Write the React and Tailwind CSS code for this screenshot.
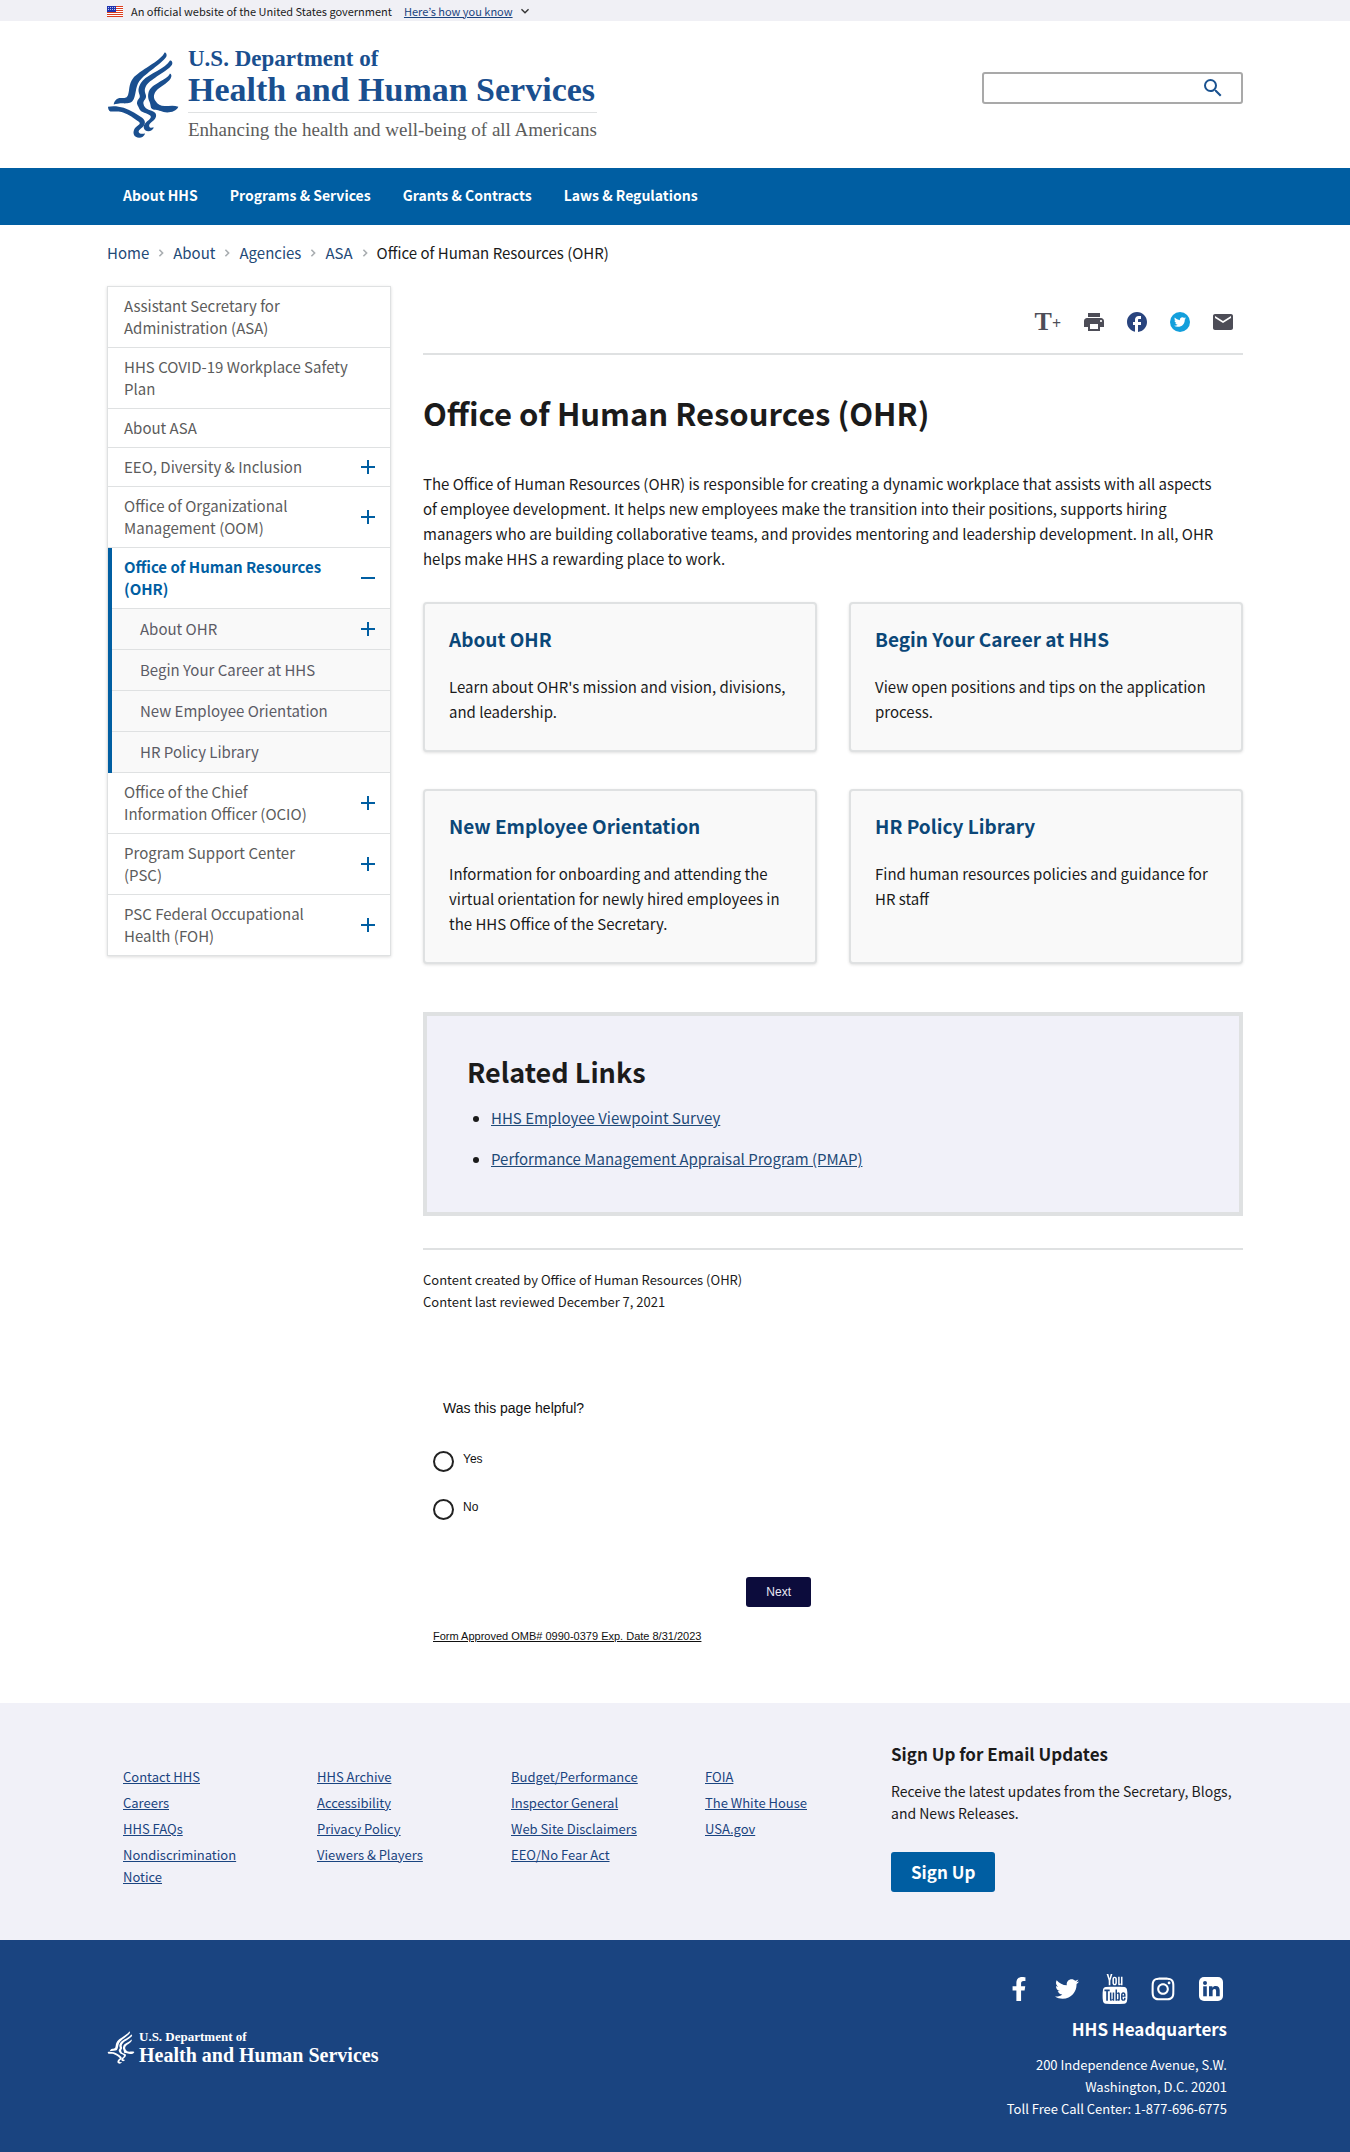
import React from "react";
import { MdSearch, MdPrint, MdFacebook, MdEmail, MdKeyboardArrowDown } from "react-icons/md";
import { FaFacebookF, FaTwitter, FaInstagram } from "react-icons/fa";
import { TfiYoutube } from "react-icons/tfi";

const container = "mx-auto w-full max-w-[1136px]";

function Flag() {
  return (
    <svg viewBox="0 0 16 11" className="h-[11px] w-4" aria-hidden="true">
      <rect width="16" height="11" fill="#fff" />
      {[0, 2, 4, 6, 8, 10].map((y) => (
        <rect key={y} y={y} width="16" height="1" fill="#db3e1f" />
      ))}
      <rect width="9" height="6" fill="#1e33b1" />
      {[1, 3, 5, 7].map((x) => (
        <g key={x} fill="#fff" opacity="0.7">
          <rect x={x} y="1" width="1" height="1" />
          <rect x={x} y="3" width="1" height="1" />
        </g>
      ))}
    </svg>
  );
}

function Eagle({ className }) {
  return (
    <svg viewBox="50 30 215 260" className={className} fill="currentColor" aria-hidden="true">
      <path d="M222 33 C226 33 230 39 227 46 C222 58 170 94 152 112 C134 130 138 154 130 172 C124 186 110 185 98 185 C86 185 78 187 70 188 C72 177 80 169 90 169 C100 169 109 171 113 159 C118 145 114 129 128 110 C144 88 212 58 222 33 Z" />
      <path d="M238 57 C244 57 247 63 244 70 C238 83 187 110 172 126 C160 139 162 150 166 160 C170 172 156 176 159 187 C162 202 176 205 188 209 C199 213 199 226 191 234 C183 242 175 246 176 253 C178 260 184 257 190 257 C186 268 172 271 164 265 C157 258 159 248 167 241 C175 234 185 228 179 221 C171 213 151 214 146 200 C142 190 137 187 141 177 C146 168 151 168 146 156 C141 142 147 129 157 117 C175 97 226 80 238 57 Z" />
      <path d="M238 96 C243 98 244 104 240 111 C232 125 207 136 196 149 C188 160 189 170 195 178 C201 188 210 193 222 193 C236 193 250 190 263 195 C258 207 244 212 230 212 C214 211 206 205 195 204 C183 204 181 198 180 191 C179 180 171 174 173 158 C176 137 192 131 204 123 C220 113 232 108 238 96 Z" />
      <path d="M53 195 C66 192 84 193 100 198 C122 205 141 219 155 228 C167 237 165 249 155 257 C147 263 142 268 146 273 C150 278 156 275 164 275 C160 287 146 291 136 285 C126 278 128 264 136 256 C143 250 153 246 145 240 C131 229 115 218 98 212 C84 207 72 211 60 209 C55 207 53 200 53 195 Z" />
    </svg>
  );
}

function LinkedInIcon() {
  return (
    <svg viewBox="0 0 24 24" className="size-6" aria-hidden="true">
      <rect width="24" height="24" rx="5" fill="#fff" />
      <g fill="#1a4480">
        <circle cx="6" cy="6" r="2" />
        <rect x="4.2" y="9.3" width="3.6" height="10" />
        <path d="M10 9.3h3.4v1.4c.6-1 1.800-1.700 3.300-1.700 2.900 0 4 1.900 4 4.600v5.700h-3.600v-5.200c0-1.300-.3-2.200-1.600-2.200-1.400 0-1.900 1-1.900 2.200v5.200H10z" />
      </g>
    </svg>
  );
}

function Toggle({ open, label }) {
  return (
    <button type="button" aria-label={label} aria-expanded={open} className="flex size-[14px] shrink-0 text-[#005ea2]">
      <svg viewBox="0 0 14 14" className="size-[14px]" fill="currentColor" aria-hidden="true">
        <rect y="6" width="14" height="2" />
        {!open && <rect x="6" width="2" height="14" />}
      </svg>
    </button>
  );
}

const navLinks = ["About HHS", "Programs & Services", "Grants & Contracts", "Laws & Regulations"];
const crumbs = ["Home", "About", "Agencies", "ASA"];

const sideItems = [
  { label: "Assistant Secretary for Administration (ASA)" },
  { label: "HHS COVID-19 Workplace Safety Plan" },
  { label: "About ASA" },
  { label: "EEO, Diversity & Inclusion", more: true },
  { label: "Office of Organizational Management (OOM)", more: true },
  {
    label: "Office of Human Resources (OHR)",
    more: true,
    children: [
      { label: "About OHR", more: true },
      { label: "Begin Your Career at HHS" },
      { label: "New Employee Orientation" },
      { label: "HR Policy Library" },
    ],
  },
  { label: "Office of the Chief Information Officer (OCIO)", more: true },
  { label: "Program Support Center (PSC)", more: true },
  { label: "PSC Federal Occupational Health (FOH)", more: true },
];

const cards = [
  { title: "About OHR", text: "Learn about OHR's mission and vision, divisions, and leadership." },
  { title: "Begin Your Career at HHS", text: "View open positions and tips on the application process." },
  {
    title: "New Employee Orientation",
    text: "Information for onboarding and attending the virtual orientation for newly hired employees in the HHS Office of the Secretary.",
  },
  { title: "HR Policy Library", text: "Find human resources policies and guidance for HR staff" },
];

const footerColumns = [
  ["Contact HHS", "Careers", "HHS FAQs", "Nondiscrimination Notice"],
  ["HHS Archive", "Accessibility", "Privacy Policy", "Viewers & Players"],
  ["Budget/Performance", "Inspector General", "Web Site Disclaimers", "EEO/No Fear Act"],
  ["FOIA", "The White House", "USA.gov"],
];

function SideItem({ item }) {
  const active = Boolean(item.children);
  return (
    <li className={active ? "border-l-4 border-[#005ea2]" : "border-b border-[#dfe1e2] last:border-b-0"}>
      <div
        className={
          active
            ? "flex items-center justify-between gap-9 py-2 pr-[15px] pl-3"
            : "flex items-center justify-between gap-9 py-2 pr-[15px] pl-4"
        }
      >
        <a href="#" className={active ? "font-bold text-[#005ea2]" : "max-w-[240px] text-[#5c5c5c]"}>
          {item.label}
        </a>
        {item.more && <Toggle open={active} label={"Toggle " + item.label} />}
      </div>
      {active && (
        <ul className="bg-[#f9f9f9]">
          {item.children.map((child) => (
            <li
              key={child.label}
              className="flex items-center justify-between border-t border-[#dfe1e2] py-[9px] pr-[15px] pl-7 last:border-b"
            >
              <a href="#" className="text-[#5c5c66]">
                {child.label}
              </a>
              {child.more && <Toggle open={false} label={"Toggle " + child.label} />}
            </li>
          ))}
        </ul>
      )}
    </li>
  );
}

export default function App() {
  return (
    <div className="bg-white font-['Noto_Sans_CJK_KR','Open_Sans',sans-serif] text-[15px] text-[#1b1b1b]">
      <div className="bg-[#f0f0f5] px-4 lg:px-0">
        <div className={container + " flex h-[21px] items-center pt-px text-[11px]"}>
          <Flag />
          <span className="ml-2">An official website of the United States government</span>
          <button type="button" className="ml-3 flex items-center text-[#1a4480]">
            <span className="underline">Here’s how you know</span>
            <MdKeyboardArrowDown className="ml-1 size-4 text-[#333]" />
          </button>
        </div>
      </div>

      <header className="px-4 lg:px-0">
        <div className={container + " flex flex-wrap items-start justify-between gap-4 pb-[27px]"}>
          <a href="#" className="flex items-center pt-7 font-['Liberation_Serif',serif] text-[#1a4f8f]">
            <Eagle className="h-[88px] w-[72px]" />
            <span className="ml-[9px] flex flex-col">
              <span className="text-[23px] leading-5 font-bold">U.S. Department of</span>
              <span className="mt-1 border-b border-[#dfe1e2] pb-[5px] text-[34px] leading-[34px] font-bold">
                Health and Human Services
              </span>
              <span className="mt-[6px] text-[19px] leading-[22px] text-[#5c5c5c]">
                Enhancing the health and well-being of all Americans
              </span>
            </span>
          </a>
          <form className="mt-[51px] flex h-8 w-[261px] items-center rounded-[3px] border-2 border-[#a9a9a9]">
            <input type="search" aria-label="Search" className="h-full min-w-0 flex-1 px-2 outline-none" />
            <button type="submit" aria-label="Search" className="mr-4 text-[#1a5290]">
              <MdSearch className="size-6" />
            </button>
          </form>
        </div>
      </header>

      <nav aria-label="Primary" className="bg-[#005ea2] px-4 lg:px-0">
        <ul className={container + " flex flex-wrap gap-x-8 px-4 pt-4 pb-[19px] text-sm leading-[22px] font-bold text-white"}>
          {navLinks.map((label) => (
            <li key={label}>
              <a href="#">{label}</a>
            </li>
          ))}
        </ul>
      </nav>

      <div className="px-4 lg:px-0">
        <nav aria-label="Breadcrumb" className={container + " pt-[15px] pb-5"}>
          <ol className="flex flex-wrap leading-[26px]">
            {crumbs.map((label) => (
              <li key={label} className="flex items-center">
                <a href="#" className="text-[#1f4a77]">
                  {label}
                </a>
                <svg viewBox="0 0 6 10" className="mx-[9px] h-2 w-[6px]" fill="none" stroke="#a9aeb1" strokeWidth="2" aria-hidden="true">
                  <path d="M1 1l4 4-4 4" />
                </svg>
              </li>
            ))}
            <li aria-current="page">Office of Human Resources (OHR)</li>
          </ol>
        </nav>

        <div className={container + " grid gap-8 pb-[59px] lg:grid-cols-[284fr_820fr]"}>
          <aside>
            <ul className="border border-[#dfe1e2] leading-[22px] shadow-[0_1px_3px_rgba(0,0,0,0.15)]">
              {sideItems.map((item) => (
                <SideItem key={item.label} item={item} />
              ))}
            </ul>
          </aside>

          <main>
            <div className="flex h-[69px] items-center justify-end gap-[23px] border-b-2 border-[#dfe1e2] pt-1 pr-[10px] text-[#4d4d57]">
              <button type="button" aria-label="Increase text size" className="flex items-end font-['Liberation_Serif',serif] font-bold">
                <span className="text-[26px] leading-5">T</span>
                <span className="text-base leading-4">+</span>
              </button>
              <button type="button" aria-label="Print">
                <MdPrint className="-mx-0.5 size-6" />
              </button>
              <a href="#" aria-label="Share on Facebook" className="text-[#29447e]">
                <MdFacebook className="-mx-0.5 size-6" />
              </a>
              <a
                href="#"
                aria-label="Share on Twitter"
                className="flex size-5 items-center justify-center rounded-full bg-[#139fdc] text-white"
              >
                <FaTwitter className="size-3" />
              </a>
              <a href="#" aria-label="Share by email">
                <MdEmail className="-mx-0.5 size-6" />
              </a>
            </div>

            <h1 className="mt-[38px] text-[31px] leading-10 font-bold">Office of Human Resources (OHR)</h1>
            <p className="mt-[38px] leading-[25px] lg:pr-5">
              The Office of Human Resources (OHR) is responsible for creating a dynamic workplace that assists with all
              aspects of employee development. It helps new employees make the transition into their positions, supports
              hiring managers who are building collaborative teams, and provides mentoring and leadership development. In
              all, OHR helps make HHS a rewarding place to work.
            </p>

            <div className="mt-[31px] grid gap-x-8 gap-y-[37px] md:grid-cols-2">
              {cards.map((card) => (
                <section
                  key={card.title}
                  className="rounded-sm border-2 border-[#dfe1e2] bg-[#f9f9f9] px-6 pt-[21px] pb-[26px] shadow-[0_1px_3px_rgba(0,0,0,0.12)]"
                >
                  <h2 className="text-[19px] leading-7 font-bold text-[#0b4778]">
                    <a href="#">{card.title}</a>
                  </h2>
                  <p className="mt-[21px] leading-[25px]">{card.text}</p>
                </section>
              ))}
            </div>

            <section className="mt-12 border-4 border-[#dfe1e2] bg-[#f1f1f9] px-10 pt-9 pb-[41px]">
              <h2 className="text-[27px] leading-10 font-bold">Related Links</h2>
              <ul className="mt-[13px] flex list-disc flex-col gap-4 pl-6 leading-[25px]">
                <li>
                  <a href="#" className="text-[#1f4a77] underline">
                    HHS Employee Viewpoint Survey
                  </a>
                </li>
                <li>
                  <a href="#" className="text-[#1f4a77] underline">
                    Performance Management Appraisal Program (PMAP)
                  </a>
                </li>
              </ul>
            </section>

            <div className="mt-8 border-t-2 border-[#dfe1e2] pt-[19px] text-[13px] leading-[22px]">
              <p>Content created by Office of Human Resources (OHR)</p>
              <p>Content last reviewed December 7, 2021</p>
            </div>

            <form className="mt-[85px] ml-[10px] flex max-w-[378px] flex-col font-['Liberation_Sans',sans-serif] text-xs text-[#111]">
              <fieldset>
                <legend className="ml-[10px] text-sm leading-5">Was this page helpful?</legend>
                <div className="mt-[33px] flex flex-col gap-[27px]">
                  {["Yes", "No"].map((answer) => (
                    <label key={answer} className="flex items-start gap-[9px] leading-4">
                      <input type="radio" name="helpful" className="size-[21px] appearance-none rounded-full border-2 border-[#222] checked:bg-[#222]" />
                      {answer}
                    </label>
                  ))}
                </div>
              </fieldset>
              <button type="button" className="mt-[57px] self-end rounded-[3px] bg-[#0c0c3c] px-5 py-[7px] leading-4 text-[#e8e8f4]">
                Next
              </button>
              <a href="#" className="mt-[21px] text-[11px] leading-4 underline">
                Form Approved OMB# 0990-0379 Exp. Date 8/31/2023
              </a>
            </form>
          </main>
        </div>
      </div>

      <footer>
        <div className="bg-[#f1f1f8] px-4 lg:px-0">
          <div className={container + " grid gap-y-8 pt-9 pr-2 pb-12 pl-4 lg:grid-cols-[768fr_344fr]"}>
            <nav aria-label="Footer" className="grid grid-cols-2 gap-x-2 pt-[27px] text-[13px] leading-[22px] md:grid-cols-4">
              {footerColumns.map((column) => (
                <ul key={column[0]} className="flex flex-col gap-1">
                  {column.map((label) => (
                    <li key={label} className="pr-10">
                      <a href="#" className="text-[#1a4480] underline">
                        {label}
                      </a>
                    </li>
                  ))}
                </ul>
              ))}
            </nav>
            <section>
              <h2 className="text-[17px] leading-[30px] font-bold">Sign Up for Email Updates</h2>
              <p className="mt-[11px] text-sm leading-[22px]">
                Receive the latest updates from the Secretary, Blogs, and News Releases.
              </p>
              <button type="button" className="mt-7 rounded-[3px] bg-[#005ea2] px-5 text-[17px] leading-10 font-bold text-white">
                Sign Up
              </button>
            </section>
          </div>
        </div>

        <div className="bg-[#1a4480] px-4 text-white lg:px-0">
          <div className={container + " flex flex-wrap items-center justify-between gap-6 pt-[34px] pr-4 pb-[33px]"}>
            <a href="#" className="flex items-center font-['Liberation_Serif',serif] font-bold">
              <Eagle className="h-[33px] w-7" />
              <span className="ml-1 flex flex-col">
                <span className="text-[13px] leading-4">U.S. Department of</span>
                <span className="text-[20px] leading-5">Health and Human Services</span>
              </span>
            </a>
            <div className="flex flex-col items-end">
              <div className="mr-1 flex items-center gap-6">
                <a href="#" aria-label="Facebook">
                  <FaFacebookF className="size-6" />
                </a>
                <a href="#" aria-label="Twitter">
                  <FaTwitter className="size-6" />
                </a>
                <a href="#" aria-label="YouTube">
                  <TfiYoutube className="-mx-[3px] size-[30px]" />
                </a>
                <a href="#" aria-label="Instagram">
                  <FaInstagram className="-mx-px size-[26px]" />
                </a>
                <a href="#" aria-label="LinkedIn">
                  <LinkedInIcon />
                </a>
              </div>
              <h2 className="mt-3 text-[17px] leading-[26px] font-bold">HHS Headquarters</h2>
              <address className="mt-3 text-right text-[13px] leading-[22px] not-italic">
                200 Independence Avenue, S.W.
                <br />
                Washington, D.C. 20201
                <br />
                Toll Free Call Center: 1-877-696-6775
              </address>
            </div>
          </div>
        </div>
      </footer>
    </div>
  );
}
